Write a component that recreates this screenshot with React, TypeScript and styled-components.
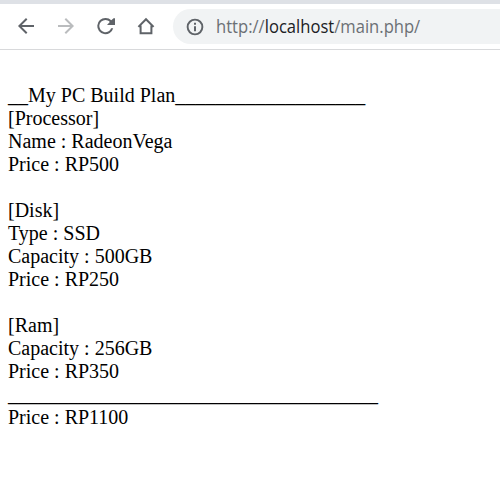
import React from "react";
import styled, { createGlobalStyle } from "styled-components";

const GlobalStyle = createGlobalStyle`
  body { margin: 0; background: #fff; overflow: hidden; }
`;

const Window = styled.div`
  display: flex;
  flex-direction: column;
  height: 484px;
  background: #fff;
`;

const TabStrip = styled.div`
  flex: none;
  height: 4px;
  background: #dee1e6;
`;

const Toolbar = styled.header`
  flex: none;
  box-sizing: border-box;
  height: 46px;
  padding: 5px 0 5px 13.7px;
  border-bottom: 1px solid #d8d9db;
  display: flex;
  align-items: flex-start;
`;

const NavButtons = styled.nav`
  display: flex;
  gap: 16px;
  margin-right: 15.3px;
  padding-top: 4.7px;
`;

const NavButton = styled.button<{ $muted?: boolean }>`
  width: 24px;
  height: 24px;
  padding: 0;
  border: 0;
  background: none;
  color: ${(p) => (p.$muted ? "#babcbe" : "#5f6368")};

  svg { display: block; }
`;

const AddressBar = styled.div`
  flex: 1;
  height: 35px;
  border-radius: 18px 0 0 18px;
  background: #f1f3f4;
  display: flex;
  align-items: center;
  padding-left: 12.5px;
  gap: 10.5px;
  color: #5f6368;

  svg { flex: none; }
`;

const Url = styled.span`
  font: 400 18px/26px "Open Sans", sans-serif;
  transform: scaleX(0.922);
  transform-origin: left;
  padding-bottom: 1px;
  white-space: pre;
  color: #6c7075;
`;

const Host = styled.span`
  color: #202124;
`;

const Page = styled.main`
  padding: 34px 8px 0;
  font: 20px/23px "Liberation Serif", "Times New Roman", serif;
  color: #000;
  white-space: pre;
`;

const Line = styled.div`
  height: 23px;
`;

const lines = [
  "__My PC Build Plan" + "_".repeat(19),
  "[Processor]",
  "Name : RadeonVega",
  "Price : RP500",
  "",
  "[Disk]",
  "Type : SSD",
  "Capacity : 500GB",
  "Price : RP250",
  "",
  "[Ram]",
  "Capacity : 256GB",
  "Price : RP350",
  "_".repeat(37),
  "Price : RP1100",
];

const Glyph = ({ d, size = 24 }: { d: string; size?: number }) => (
  <svg width={size} height={size} viewBox="0 0 24 24" fill="currentColor">
    <path d={d} />
  </svg>
);

export default function App() {
  return (
    <Window>
      <GlobalStyle />
      <TabStrip />
      <Toolbar>
        <NavButtons>
          <NavButton aria-label="Back">
            <Glyph d="M20 11H7.83l5.59-5.59L12 4l-8 8 8 8 1.41-1.41L7.83 13H20v-2z" />
          </NavButton>
          <NavButton aria-label="Forward" $muted>
            <Glyph d="M12 4l-1.41 1.41L16.17 11H4v2h12.17l-5.58 5.59L12 20l8-8z" />
          </NavButton>
          <NavButton aria-label="Reload">
            <Glyph d="M17.3 6.3A8 8 0 0 0 11.4 4a8.1 8.1 0 1 0 7.8 10.2h-2.1A6.1 6.1 0 1 1 11.4 6c1.7 0 3.3.7 4.4 1.9L13 11h8V4.2h-1.4z" />
          </NavButton>
          <NavButton aria-label="Home">
            <svg width="24" height="24" viewBox="0 0 24 24" fill="none" stroke="currentColor" strokeWidth="2">
              <path d="M4.4 12.9 12 5.2l7.6 7.7M6.6 11.5v7.8h10.8v-7.8" />
            </svg>
          </NavButton>
        </NavButtons>
        <AddressBar>
          <Glyph
            size={20}
            d="M10.8 17h2.4v-6h-2.4v6zM12 2a10 10 0 1 0 0 20 10 10 0 0 0 0-20zm0 17.7a7.7 7.7 0 1 1 0-15.4 7.7 7.7 0 0 1 0 15.4zM10.8 9.2h2.4V6.8h-2.4v2.4z"
          />
          <Url>
            http://<Host>localhost</Host>/main.php/
          </Url>
        </AddressBar>
      </Toolbar>
      <Page>
        {lines.map((text, i) => (
          <Line key={i}>{text}</Line>
        ))}
      </Page>
    </Window>
  );
}
